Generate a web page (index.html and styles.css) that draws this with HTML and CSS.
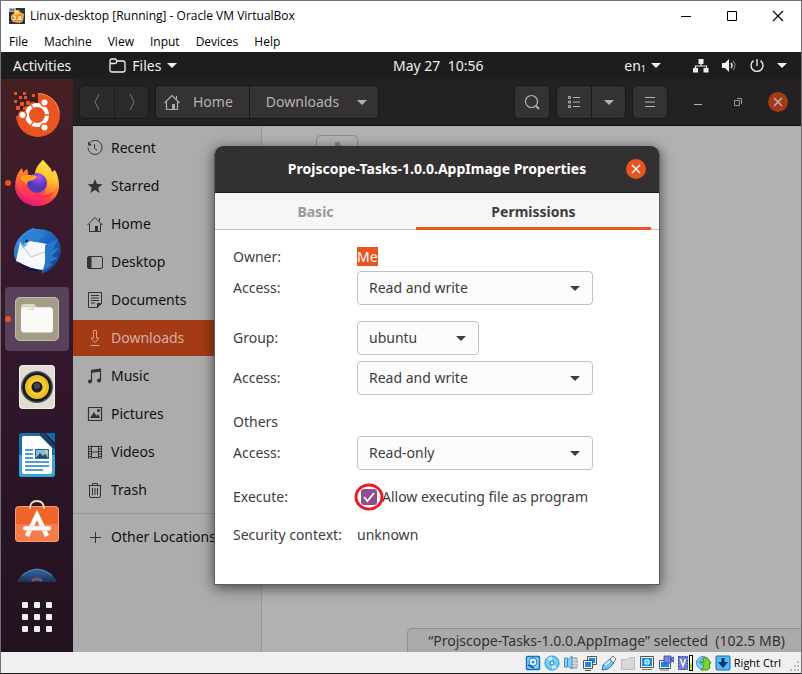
FILE: index.html
```html
<!DOCTYPE html>
<html lang="en">
<head>
<meta charset="utf-8">
<title>Linux-desktop [Running] - Oracle VM VirtualBox</title>
<link rel="stylesheet" href="styles.css">
</head>
<body>
<div class="vm">
  <header class="titlebar">
    <svg class="app-icon" width="16" height="16" viewBox="0 0 16 16"><rect width="16" height="16" fill="#2b3240"/><path d="M0 0h7v4H0z" fill="#aab2bd"/><path d="M1 2h4" stroke="#3c4654"/><path d="M2 8l3-3 1-3 4 0 1 2 4 2-1 7-3 2-7-1-2-3z" fill="#f4b23c"/><path d="M6 3l3 0 1 2-4 1z" fill="#ffe08a"/><path d="M3 9l10-3-1 7-8 0z" fill="#e08a1c"/><text x="4" y="12" font-size="6" font-weight="700" fill="#fff">2.6</text></svg>
    <h1>Linux-desktop [Running] - Oracle VM VirtualBox</h1>
    <div class="win-controls">
      <button type="button" aria-label="Minimize"><svg width="12" height="12"><path d="M1 6.500h10" stroke="#000"/></svg></button>
      <button type="button" aria-label="Maximize"><svg width="12" height="12"><path d="M1.500 1.500h9v9h-9z" fill="none" stroke="#000"/></svg></button>
      <button type="button" aria-label="Close"><svg width="12" height="12"><path d="M1 1l10 10M11 1L1 11" stroke="#000" stroke-width="1.100"/></svg></button>
    </div>
  </header>
  <nav class="menubar">
    <button type="button">File</button><button type="button">Machine</button><button type="button">View</button><button type="button">Input</button><button type="button">Devices</button><button type="button">Help</button>
  </nav>

  <div class="guest">
    <div class="panel">
      <div class="panel-left">
        <button type="button">Activities</button>
        <button type="button" class="files-menu"><svg width="17" height="15" viewBox="0 0 17 15"><path d="M1 12V3q0-2 2-2h3q1 0 2 2h6q2 0 2 2v7q0 2-2 2H3q-2 0-2-2zM1 5.500h5q1.500 0 2-2" fill="none" stroke="#eee" stroke-width="1.300"/></svg>Files<span class="caret"></span></button>
      </div>
      <button type="button" class="clock">May 27&nbsp; 10:56</button>
      <div class="panel-right">
        <button type="button" class="lang">en<small>1</small><span class="caret"></span></button>
        <button type="button" class="tray" aria-label="System">
          <svg width="16" height="16" viewBox="0 0 16 16"><path d="M5.500 1h5v5h-5zM0 10h5v4.500H0zM10.500 10h5v4.500h-5z" fill="#eee"/><path d="M8 6v2M2.500 10.500V8h11v2.500" fill="none" stroke="#eee" stroke-width="1.200"/></svg>
          <svg width="16" height="16" viewBox="0 0 16 16"><path d="M1 5h3l4-4v13l-4-4H1z" fill="#eee"/><path d="M10 5q2 2.500 0 5" fill="none" stroke="#eee" stroke-width="1.400"/><path d="M12 3q4 4.500 0 9" fill="none" stroke="#777" stroke-width="1.200"/></svg>
          <svg width="16" height="16" viewBox="0 0 16 16"><path d="M4.500 2.600a6 6 0 1 0 7 0M8 1v7" fill="none" stroke="#eee" stroke-width="1.300"/></svg>
          <span class="caret"></span>
        </button>
      </div>
    </div>

    <div class="desktop">
      <aside class="dock">
        <ul class="launchers">
          <li><svg width="48" height="48" viewBox="0 0 48 48"><path d="M25 2a22 22 0 1 1-22 23h4v-5h5v-5h5v4h4v-6h4z" fill="#e95420"/><path d="M25 2.500a21.500 21.500 0 0 1 21 19" fill="none" stroke="#f48258"/><path d="M1 1h3v3H1zM10 1h3v3h-3zM19 3h3v3h-3zM6 5h3v3H6zM11 5h3v3h-3zM1 9h3v3H1zM7 11h4v4H7zM13 10h4v4h-4zM18 11h4v4h-4zM3 15h4v4H3zM10 16h3v3h-3z" fill="#e95420"/><circle cx="24" cy="24" r="10" fill="#e95420" stroke="#fff" stroke-width="4"/><g fill="#e95420"><circle cx="9.500" cy="24" r="4.500"/><circle cx="31.500" cy="11.500" r="4.500"/><circle cx="31.500" cy="36.500" r="4.500"/></g><path d="M20 17l-3-5M20 31l-3 5M32 24h6" stroke="#e95420" stroke-width="1.400"/><g fill="#fff"><circle cx="9.500" cy="24" r="3"/><circle cx="31.500" cy="11.500" r="3"/><circle cx="31.500" cy="36.500" r="3"/></g></svg></li>
          <li class="running"><svg width="48" height="48" viewBox="0 0 48 48"><defs><linearGradient id="fx" x1=".8" y1="0" x2=".3" y2="1"><stop offset="0" stop-color="#fff04a"/><stop offset=".4" stop-color="#ffa41c"/><stop offset=".7" stop-color="#ff4040"/><stop offset="1" stop-color="#e0128a"/></linearGradient><linearGradient id="fx2" x1="0" y1="0" x2=".4" y2="1"><stop offset="0" stop-color="#ff9a1c"/><stop offset=".6" stop-color="#ff3f48"/><stop offset="1" stop-color="#ff2b66"/></linearGradient><linearGradient id="fx3" x1=".6" y1="0" x2=".3" y2="1"><stop offset="0" stop-color="#fff04a"/><stop offset=".5" stop-color="#ffc02a"/><stop offset="1" stop-color="#ff5a3a"/></linearGradient><radialGradient id="fp" cx=".6" cy=".2"><stop offset="0" stop-color="#a951f7"/><stop offset="1" stop-color="#5538b8"/></radialGradient></defs><path d="M30 1q4 4 8 9l1 3 3-2q4 7 4 16a22 20 0 0 1-44 0q0-10 7-17l1 4 4-4 1 6 7 1q1-9 8-16z" fill="url(#fx)"/><path d="M9 9l1 5 4-4 1 6 8 1-2 4-6 2q-1 8 5 11 6 2 12-2 8 0 12-8 1 8-7 13-14 8-26 0-7-6-8-14 0-8 6-14z" fill="url(#fx2)"/><path d="M30 1q-8 7-8 14 13-1 12 10 1 9-7 11 13 2 17-8 2-8-3-15l-3 1q-5-7-8-13z" fill="url(#fx3)"/><circle cx="24" cy="24" r="10" fill="url(#fp)"/><path d="M8 17q8-2 16 0 0 4-8 5-2 1-3 4-1-4-5-5z" fill="#ffa01c"/></svg></li>
          <li><svg width="48" height="48" viewBox="0 0 48 48"><defs><linearGradient id="tb" x2="1" y2="1"><stop offset="0" stop-color="#3da4ee"/><stop offset=".5" stop-color="#1c64be"/><stop offset="1" stop-color="#1c347d"/></linearGradient></defs><path d="M14 4l6-3 3 1q16-1 22 11 6 11-1 22-5 9-16 12l2-5-8 3Q6 42 1 29 0 16 9 8z" fill="url(#tb)"/><path d="M7 15l11-1 16 3 1 17-5 9-12-2-15-7z" fill="#f7f8fa"/><path d="M7 15l11 15 16-6" fill="none" stroke="#b9c1cb"/><path d="M8 17Q10 5 24 3l8 5-9 7-6-1-5 3-2 3z" fill="#2c7fd3"/><path d="M9 18l4-3 1 3-4 3z" fill="#58b7e8"/><circle cx="13.500" cy="14" r="1.300" fill="#101828"/><path d="M32 18l13-6-5 10 6-1-7 8 6 2-9 5 4 1-12 9q5-8 4-17z" fill="#2778c9"/><path d="M4 34q8 6 22 9l-3 2Q9 44 4 34z" fill="#1b1238"/></svg></li>
          <li class="running active"><svg width="48" height="48" viewBox="0 0 48 48"><rect x="2" y="2" width="44" height="44" rx="5" fill="#a59c86"/><rect x="2.500" y="2.500" width="43" height="43" rx="5" fill="none" stroke="#c4bba8"/><path d="M8 12q0-3 3-3h10l3 3h14v8H8z" fill="#ddd7c9"/><rect x="8" y="12.500" width="32" height="25" rx="3" fill="#fafaf8"/><path d="M8 15q10 0 13-3v3z" fill="#ddd7c9"/></svg></li>
          <li><svg width="48" height="48" viewBox="0 0 48 48"><rect x="6" y="2" width="36" height="44" rx="4" fill="#e2ddd3"/><rect x="6.500" y="2.500" width="35" height="43" rx="4" fill="none" stroke="#f5f1e9"/><circle cx="24" cy="24" r="16" fill="#4a505a"/><circle cx="24" cy="24" r="14.500" fill="#15181e"/><circle cx="24" cy="24" r="12" fill="#efbd20"/><circle cx="24" cy="24" r="9" fill="#f6cb3a"/><circle cx="24" cy="24" r="5.500" fill="#1d1d1d"/><circle cx="24" cy="23" r="3" fill="#484848"/></svg></li>
          <li><svg width="48" height="48" viewBox="0 0 48 48"><path d="M9 2h21l12 13v28q0 3-3 3H9q-3 0-3-3V5q0-3 3-3z" fill="#1770aa"/><path d="M6 24h36v19q0 3-3 3H9q-3 0-3-3z" fill="#38a5d8"/><path d="M10 5h17l12 12v24q0 2-2 2H11q-2 0-2-2V6z" fill="#fff"/><path d="M32 2h10v10z" fill="#0e6da6"/><path d="M27 2l15 15" stroke="#1d3348" stroke-width="2"/><path d="M12 19h8M12 23h8M12 27h8M12 31h24M12 35h24M12 39h18" stroke="#1c7cb8" stroke-width="1.700"/><rect x="22.500" y="18.500" width="13" height="9" fill="#7bbde4" stroke="#176da4"/><path d="M23 27l4-5 3 3 2-2 3 4z" fill="#39444d"/><circle cx="33.500" cy="20.500" r="1.500" fill="#ffd52f"/></svg></li>
          <li><svg width="48" height="48" viewBox="0 0 48 48"><rect x="2" y="7" width="44" height="36" rx="4" fill="#f0642c"/><path d="M2 25h44v14q0 4-4 4H6q-4 0-4-4z" fill="#f57c4a"/><rect x="2.500" y="7.500" width="43" height="35" rx="4" fill="none" stroke="#f89b73"/><path d="M14 37l10-21 10 21" fill="none" stroke="#fff" stroke-width="4.500"/><rect x="10" y="27" width="28" height="4.500" rx="2" fill="#fff" stroke="#f3a17f" stroke-width=".5"/><path d="M17 10q0-8 7-8t7 8" fill="none" stroke="#f4ddaa" stroke-width="1.800"/></svg></li>
          <li><svg width="48" height="48" viewBox="0 0 48 48"><defs><linearGradient id="hp" y2="1" x2="0"><stop offset="0" stop-color="#316ba9"/><stop offset=".3" stop-color="#202f51"/></linearGradient></defs><circle cx="24" cy="24" r="22" fill="url(#hp)"/><path d="M19 14q5-4 10 0" fill="none" stroke="#6d5968" stroke-width="3"/><path d="M9 8.500q15-13 30 0" fill="none" stroke="#5b89bb"/></svg></li>
        </ul>
        <button type="button" class="apps" aria-label="Show Applications"><svg width="32" height="32" viewBox="0 0 32 32" fill="#f1f0ee"><rect x="1" y="1" width="6" height="6" rx="1"/><rect x="13" y="1" width="6" height="6" rx="1"/><rect x="25" y="1" width="6" height="6" rx="1"/><rect x="1" y="13" width="6" height="6" rx="1"/><rect x="13" y="13" width="6" height="6" rx="1"/><rect x="25" y="13" width="6" height="6" rx="1"/><rect x="1" y="25" width="6" height="6" rx="1"/><rect x="13" y="25" width="6" height="6" rx="1"/><rect x="25" y="25" width="6" height="6" rx="1"/></svg></button>
      </aside>

      <main class="files">
        <header class="headerbar">
          <div class="group nav">
            <button type="button" aria-label="Back"><svg width="16" height="18"><path d="M10 1L6 9l4 8" fill="none" stroke="#777"/></svg></button>
            <button type="button" aria-label="Forward"><svg width="16" height="18"><path d="M6 1l4 8-4 8" fill="none" stroke="#777"/></svg></button>
          </div>
          <div class="group path">
            <button type="button"><svg width="16" height="16" viewBox="0 0 16 16" fill="none" stroke="#b0aeac" stroke-width="1.200"><path d="M.5 9L8 1.500 15.500 9M2.500 8v7.500h11V8M12.500 5V2"/><path d="M8 10h3v5H8z" fill="#b0aeac" stroke="none"/></svg>Home</button>
            <button type="button">Downloads<span class="caret"></span></button>
          </div>
          <div class="group push"><button type="button" aria-label="Search"><svg width="16" height="16" fill="none" stroke="#b5b3b1" stroke-width="1.200"><circle cx="7.500" cy="7.500" r="6"/><path d="M12 12l3 3" stroke-width="2"/></svg></button></div>
          <div class="group">
            <button type="button" aria-label="List view"><svg width="14" height="14" fill="none" stroke="#b5b3b1"><path d="M1.500 1.500h2v2h-2zM1.500 6h2v2h-2zM1.500 10.500h2v2h-2zM6 2.500h7M6 7h7M6 11.500h7"/></svg></button>
            <button type="button" aria-label="View options"><span class="caret"></span></button>
          </div>
          <div class="group"><button type="button" aria-label="Menu"><svg width="12" height="12"><path d="M1 1.500h10M1 6h10M1 10.500h10" stroke="#b5b3b1"/></svg></button></div>
          <div class="frame-controls">
            <button type="button" aria-label="Minimize"><svg width="10" height="10"><path d="M1 7.500h8" stroke="#b5b3b1"/></svg></button>
            <button type="button" aria-label="Restore"><svg width="10" height="10"><path d="M1.500 3.500h5v5h-5zM4 1.500h4.500V7" fill="none" stroke="#999"/></svg></button>
            <button type="button" class="close dim" aria-label="Close"><svg width="10" height="10"><path d="M1 1l8 8M9 1L1 9" stroke="#bbb" stroke-width="1.400"/></svg></button>
          </div>
        </header>
        <div class="content">
          <nav class="sidebar">
            <a href="#"><svg width="16" height="16" fill="none" stroke="#333"><path d="M2.200 3.500A7 7 0 1 1 1 7.500M7.500 4v4.500l2.500 1.500"/><path d="M1 1.500v4h4z" fill="#333" stroke="none"/></svg>Recent</a>
            <a href="#"><svg width="16" height="16"><path d="M8 1l2 5 5.500.3-4.300 3.500 1.500 5.200L8 12l-4.700 3 1.500-5.200L.5 6.300 6 6z" fill="#333"/></svg>Starred</a>
            <a href="#"><svg width="16" height="16" fill="none" stroke="#333"><path d="M.5 9L8 1.500 15.500 9M2.500 8v7.500h11V8M12.500 5V2"/><path d="M8 10h3v5H8z" fill="#333" stroke="none"/></svg>Home</a>
            <a href="#"><svg width="16" height="16"><rect x=".5" y="2.500" width="15" height="12" rx="1.500" fill="none" stroke="#333"/><path d="M1 3h3.500v11H1z" fill="#333"/></svg>Desktop</a>
            <a href="#"><svg width="16" height="16" fill="none" stroke="#333"><path d="M1.500.5h13v11l-4 4h-9zM4 3.500h8M4 6h8M4 8.500h8M4 11h4"/><path d="M10 11h5l-5 5z" fill="#333" stroke="none"/></svg>Documents</a>
            <a href="#" class="selected" aria-current="page"><svg width="16" height="16" fill="none" stroke="#d0a493"><path d="M6.500.5h3v7.500h2.500L8 12.500 4 8h2.500zM3.500 15.500h9"/></svg>Downloads</a>
            <a href="#"><svg width="16" height="16"><path d="M4.500 13V2.500l9-1V12" fill="none" stroke="#333" stroke-width="1.200"/><path d="M4 2l10-1.500v3L4 5z" fill="#333"/><circle cx="3" cy="13.500" r="2" fill="#333"/><circle cx="12" cy="12.500" r="2" fill="#333"/></svg>Music</a>
            <a href="#"><svg width="16" height="16"><path d="M1.500 1.500h13v13h-13z" fill="none" stroke="#333" stroke-width="1.200"/><path d="M3 12l4-6 2.500 4L11 8l2 4z" fill="#333"/><circle cx="11.500" cy="4.500" r="1.500" fill="#333"/></svg>Pictures</a>
            <a href="#"><svg width="16" height="16" fill="none" stroke="#333"><path d="M4 2.500h8M4 8h8M4 13.500h8M4.500 1.500v13M11.500 1.500v13"/><path d="M1.500 1.500v13M14.500 1.500v13"/><path d="M3 2v13M13 2v13" stroke-width="2" stroke-dasharray="1 1.500"/></svg>Videos</a>
            <a href="#"><svg width="16" height="16" fill="none" stroke="#333"><path d="M1.500 3.500h13M5.500 3V1.500h5V3M2.500 4v10q0 1.500 1.500 1.500h8q1.500 0 1.500-1.500V4M5.500 6v7M8 6v7M10.500 6v7"/></svg>Trash</a>
            <hr>
            <a href="#"><svg width="16" height="16"><path d="M3 8.500h11M8.500 3v11" stroke="#333"/></svg>Other Locations</a>
          </nav>
          <section class="folder">
            <svg width="42" height="52" viewBox="0 0 42 52" fill="none" stroke="#8e8e8e"><rect x=".5" y=".5" width="41" height="51" rx="4" fill="#b3b3b3"/><path d="M19 11V7h5v3l5 2 2-2 3 3-2 3 2 5h3v5H6v-5h3l1-5-1-3 2-2 4 1z" fill="#858585" stroke="none"/></svg>
          </section>
        </div>
        <output class="floating-status">“Projscope-Tasks-1.0.0.AppImage” selected&nbsp; (102.5 MB)</output>

        <div class="modal-layer">
          <form class="dialog" role="dialog" aria-labelledby="dlg-title">
            <header class="dialog-head">
              <h2 id="dlg-title">Projscope-Tasks-1.0.0.AppImage Properties</h2>
              <button type="button" class="close" aria-label="Close"><svg width="10" height="10"><path d="M1 1l8 8M9 1L1 9" stroke="#fff" stroke-width="1.400"/></svg></button>
            </header>
            <div class="tabs" role="tablist">
              <button type="button" role="tab" aria-selected="false">Basic</button>
              <button type="button" role="tab" aria-selected="true">Permissions</button>
            </div>
            <div class="dialog-body">
              <div class="section tight">
                <div class="row"><span>Owner:</span><span><mark>Me</mark></span></div>
                <div class="row"><label for="a1">Access:</label><span class="combo"><select id="a1"><option>Read and write</option><option>Read-only</option></select></span></div>
              </div>
              <div class="section">
                <div class="row"><label for="grp">Group:</label><span class="combo small"><select id="grp"><option>ubuntu</option></select></span></div>
                <div class="row"><label for="a2">Access:</label><span class="combo"><select id="a2"><option>Read and write</option><option>Read-only</option></select></span></div>
              </div>
              <div class="section tight">
                <div class="row"><span>Others</span></div>
                <div class="row"><label for="a3">Access:</label><span class="combo"><select id="a3"><option>Read-only</option><option>Read and write</option></select></span></div>
              </div>
              <div class="row"><span>Execute:</span><label class="check"><input type="checkbox" checked><svg class="tick" width="16" height="16"><path d="M3 8l3.500 4L13 4" fill="none" stroke="#fff" stroke-width="1.800"/></svg><svg class="ring" width="30" height="28"><ellipse cx="15" cy="14" rx="13" ry="12" fill="none" stroke="#ed1c24" stroke-width="3"/></svg>Allow executing file as program</label></div>
              <div class="row"><span>Security context:</span><span>unknown</span></div>
            </div>
          </form>
        </div>
      </main>
    </div>
  </div>

  <footer class="statusbar">
    <svg width="16" height="16"><rect x="1.500" y="1.500" width="13" height="13" rx="1" fill="#7fd2f8" stroke="#176fc4" stroke-width="1.400"/><circle cx="8" cy="7" r="4" fill="#e8f8ff" stroke="#2878c0"/><circle cx="8" cy="7" r="1.500" fill="#2a86d8"/><path d="M3 10l6 3" stroke="#145ba8" stroke-width="1.500"/></svg>
    <svg width="16" height="16"><circle cx="8" cy="8" r="7" fill="#6fd0fb" stroke="#2488d4"/><path d="M8 8L3 3.500a7 7 0 0 1 5-2zM8 8l5 4.500a7 7 0 0 1-5 2z" fill="#b8ecff"/><circle cx="8" cy="8" r="2" fill="#d9f4ff" stroke="#2b79ba"/></svg>
    <svg width="16" height="16"><path d="M8 3h6v10H8z" fill="#bbb" stroke="#999"/><path d="M9 5h5M9 8h5M9 11h5" stroke="#eee"/><path d="M1.500 3h3v9h-3zM4.500 5L9 1v13l-4.500-3z" fill="#88d1f7" stroke="#3f8fc6"/></svg>
    <svg width="16" height="16" stroke="#555"><path d="M5.500 1.500h9v8h-9z" fill="#e9f4fb"/><path d="M7 3h6v5H7z" fill="#178bea" stroke="none"/><path d="M1.500 5.500h9v8h-9z" fill="#e9f4fb"/><path d="M3 7h6v5H3z" fill="#178bea" stroke="none"/><path d="M3 15.500h6"/></svg>
    <svg width="16" height="16"><path d="M1 15l1-5 7-6 4 4-6 6z" fill="#70c5f6" stroke="#276fc0"/><path d="M9 4l3-3 3 3-3 4z" fill="#eee" stroke="#777"/><path d="M4 10l5-4" stroke="#d7f3ff" stroke-width="2"/></svg>
    <svg width="16" height="16"><path d="M1.500 4.500h6l2-2h5v12h-13z" fill="#d8d8d8" stroke="#bdbdbd"/></svg>
    <svg width="16" height="16"><path d="M1.500 1.500h13v11h-13z" fill="#e9f4fb" stroke="#555"/><path d="M3 3h10v8H3z" fill="#138be8"/><path d="M6 5h4v4H6z" fill="#5cc0fa" stroke="#fff"/><path d="M3 14.500h10" stroke="#777"/></svg>
    <svg width="16" height="16"><path d="M1.500 5.500h11v8h-11z" fill="#e9f4fb" stroke="#555"/><path d="M3 7h8v5H3z" fill="#138be8"/><path d="M6 1h7v7H6zM13 3l3-1v5l-3-1z" fill="#6f82dc" stroke="#3c46a8" stroke-width=".8"/><path d="M2 15h9" stroke="#777"/></svg>
    <svg width="16" height="16"><path d="M1.500 1.500h9v13h-9z" fill="#737fd5" stroke="#323a9c" stroke-dasharray="2 1"/><path d="M3.500 4L6 11l2.500-7" fill="none" stroke="#fff" stroke-width="1.400"/><path d="M12 0h4v16h-4z" fill="#000"/><path d="M13 1h2v7h-2z" fill="#fff"/><path d="M13 8h2v7h-2z" fill="#9bea1a"/></svg>
    <svg width="16" height="16"><circle cx="7" cy="8" r="6.500" fill="#85d4fa" stroke="#418abc"/><path d="M2 7l5-5-2 6 1 4z" fill="#47aae8"/><path d="M7 3l4 0 4 5-2 1 1 4-3 2-6 0 3-4-3-4 3 0z" fill="#7bd42d" stroke="#418a1a"/></svg>
    <svg width="16" height="16"><rect x="1" y="1" width="14" height="14" rx="1" fill="#54baf5" stroke="#176eb0"/><path d="M6.500 3h3v4H13l-5 6-5-6h3.500z" fill="#073568"/></svg>
    <span>Right Ctrl</span>
    <svg class="grip" width="10" height="10" fill="#bcbcbc"><path d="M7 0h2v2H7zM4 4h2v2H4zM7 4h2v2H7zM0 8h2v2H0zM4 8h2v2H4zM7 8h2v2H7z"/></svg>
  </footer>
</div>
</body>
</html>
```
FILE: styles.css
```css
* { box-sizing: border-box; }
body { margin: 0; font: 14px/22px "Noto Sans", "Open Sans", sans-serif; color: #3d3d3d; }
button, select { font: inherit; color: inherit; background: none; border: 0; padding: 0; margin: 0; }
h1, h2, ul { margin: 0; padding: 0; font-size: inherit; }
svg { display: block; flex: none; }

.vm { height: 100vh; display: flex; flex-direction: column; border: 1px solid #707070; border-bottom-color: #1c1c1c; background: #fff; }
.titlebar, .menubar, .statusbar { font-family: "Open Sans", "Noto Sans", sans-serif; font-size: 12px; color: #000; flex: none; }
.titlebar { display: flex; align-items: center; height: 30px; padding-left: 8px; gap: 5px; }
.titlebar h1 { font-weight: 400; white-space: nowrap; }
.win-controls { display: flex; margin-left: auto; }
.win-controls button { width: 46px; height: 30px; display: grid; place-items: center; }
.menubar { display: flex; gap: 16px; height: 21px; padding-left: 8px; line-height: 20px; }

.guest { flex: 1; min-height: 0; display: flex; flex-direction: column; }
.panel { display: grid; grid-template-columns: 49% auto 1fr; align-items: center; height: 27px; background: #1d1d1d; color: #eee; flex: none; }
.panel-left, .panel-right, .panel button { display: flex; align-items: center; }
.panel-left { padding-left: 12px; gap: 38px; }
.panel-right { justify-content: flex-end; padding-right: 14px; gap: 32px; }
.files-menu { gap: 6px; }
.lang small { font-size: 9px; line-height: 10px; margin: 6px 5px 0 0; }
.panel .tray { gap: 12px; }
.caret { display: inline-block; border: 5px solid transparent; border-top-color: currentColor; border-bottom: 0; }

.desktop { flex: 1; min-height: 0; display: flex; }
.dock { width: 72px; flex: none; display: flex; flex-direction: column; background: linear-gradient(#471f24, #3a1a2d 25%, #2e162b 60%, #21121e); }
.launchers { list-style: none; flex: 1; min-height: 0; overflow: hidden; display: flex; flex-direction: column; gap: 4px; padding: 4px; }
.launchers li { height: 64px; flex: none; display: grid; place-items: center; border-radius: 4px; position: relative; }
.launchers .active { background: #57425a; }
.running::before { content: ""; position: absolute; left: 0; top: 29px; width: 6px; height: 6px; border-radius: 50%; background: #e95420; }
.apps { height: 70px; flex: none; display: grid; place-items: center; }

.files { flex: 1; min-width: 0; display: flex; flex-direction: column; position: relative; background: #b1b1b1; }
.headerbar { display: flex; align-items: center; gap: 6px; height: 47px; padding: 0 13px 0 6px; background: #232122; border-bottom: 1px solid #111; color: #b5b3b1; flex: none; }
.group { display: flex; height: 34px; border: 1px solid #191718; border-radius: 5px; background: #343233; }
.group button { min-width: 34px; display: flex; align-items: center; justify-content: center; }
.group button + button { border-left: 1px solid #1c1a1b; }
.nav { background: #2b2a2a; }
.path button { padding: 0 16px 0 8px; gap: 13px; }
.path button + button { padding: 0 11px 0 16px; gap: 18px; }
.push { margin-left: auto; }
.frame-controls { display: flex; gap: 20px; margin-left: 14px; }
.frame-controls button { width: 20px; height: 20px; display: grid; place-items: center; }
.close { border-radius: 50%; background: #e95420; }
.close.dim { background: #a33b17; }

.content { flex: 1; min-height: 0; display: flex; }
.sidebar { width: 189px; flex: none; display: flex; flex-direction: column; gap: 2px; padding-top: 4px; background: #acacac; border-right: 1px solid #989898; overflow: hidden; }
.sidebar a { display: flex; align-items: center; gap: 8px; height: 36px; flex: none; padding-left: 14px; color: #111; text-decoration: none; white-space: nowrap; }
.sidebar .selected { background: #a33b17; color: #d6b0a2; }
.sidebar hr { width: 100%; margin: 3px 0; border: 0; border-top: 1px solid #989898; }
.folder { flex: 1; padding: 9px 54px; }
.floating-status { position: absolute; right: 0; bottom: 0; height: 24px; line-height: 23px; padding: 0 16px 0 20px; background: #aaa; border: 1px solid #8e8e8e; border-width: 1px 0 0 1px; border-radius: 5px 0 0 0; white-space: nowrap; color: #333; }

.modal-layer { position: absolute; inset: 0; display: grid; place-items: center; }
.dialog { width: 446px; border: 1px solid #5e5e5e; border-top: 0; border-radius: 8px 8px 0 0; background: #fff; box-shadow: 0 3px 14px rgba(0, 0, 0, .6); }
.dialog-head { display: grid; grid-template-columns: 1fr auto 1fr; align-items: center; height: 47px; padding: 0 13px; border-radius: 8px 8px 0 0; background: #323031; border-bottom: 1px solid #1c191a; color: #fff; }
.dialog-head h2 { grid-column: 2; font-size: 14px; white-space: nowrap; }
.dialog-head .close { width: 20px; height: 20px; justify-self: end; display: grid; place-items: center; }
.tabs { display: grid; grid-template-columns: 1fr 1fr; height: 37px; padding: 0 8px 0 0; background: #f6f6f6; box-shadow: inset 0 -1px #c0c0c0; font-weight: 700; }
.tabs button { color: #999; }
.tabs [aria-selected="true"] { color: #3d3d3d; box-shadow: inset 0 -3px #e95420; margin-left: -17px; }
.tabs [aria-selected="false"] { padding-right: 17px; }
.dialog-body { display: flex; flex-direction: column; gap: 16px; padding: 16px 18px 38px; }
.section { display: flex; flex-direction: column; gap: 6px; }
.tight { gap: 3px; }
.row { display: grid; grid-template-columns: 124px 1fr; align-items: center; white-space: nowrap; }
mark { background: #e95420; color: #fff; }
.combo { position: relative; width: 236px; }
.combo.small { width: 122px; }
.combo::after { content: ""; position: absolute; right: 13px; top: 15px; border: 5px solid transparent; border-top-color: #3d3d3d; border-bottom: 0; pointer-events: none; }
.combo select { appearance: none; display: block; width: 100%; height: 34px; padding: 0 11px; border: 1px solid #c0c0c0; border-radius: 4px; background: #fcfcfc; }
.check { display: flex; align-items: center; position: relative; gap: 5px; padding-left: 4px; }
.check input { appearance: none; width: 16px; height: 16px; margin: 0; border-radius: 3px; background: #924d8b; }
.check .tick { position: absolute; left: 4px; }
.check .ring { position: absolute; left: -3px; }

.statusbar { display: flex; align-items: center; gap: 3px; height: 21px; justify-content: flex-end; background: #f0f0f0; line-height: 20px; }
.statusbar span { font-size: 11px; }
.statusbar .grip { margin: 6px 1px 0 6px; }
.app-icon { font-family: "Noto Sans", sans-serif; }
```
